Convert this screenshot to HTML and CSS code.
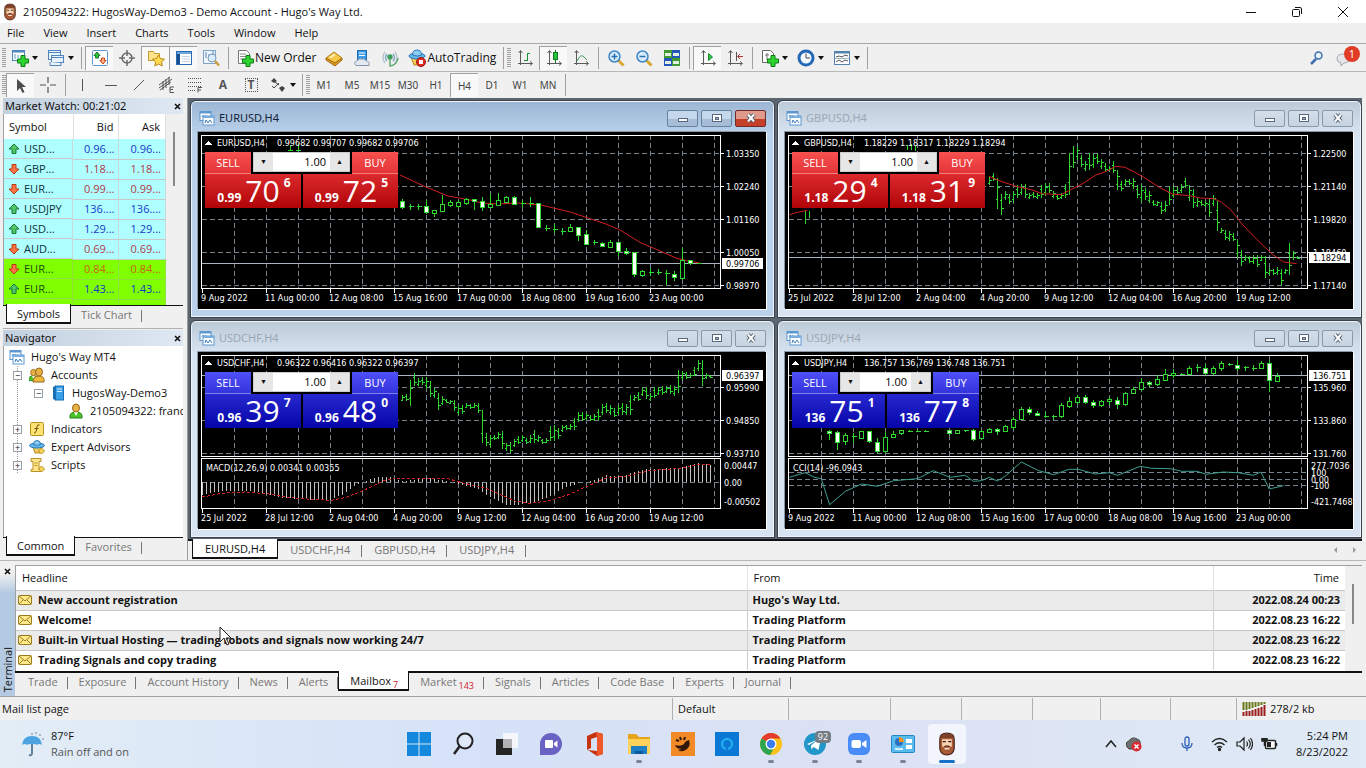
FILE: index.html
```html
<!DOCTYPE html>
<html lang="en">
<head>
    <meta charset="UTF-8">
    <meta name="viewport" content="width=device-width, initial-scale=1.0">
    <title>2105094322: HugosWay-Demo3 - Demo Account - Hugo's Way Ltd.</title>
    <link rel="stylesheet" href="styles.css">
</head>
<body>
    <!-- shared icons -->
    <svg class="sprite" aria-hidden="true">
        <symbol id="i-face" viewBox="0 0 16 20">
            <path d="M2 6Q2 1 8 1T14 6V14Q13 19 8 19T2 14Z" fill="#a85a34" stroke="#4a261a"/>
            <path d="M4 6h8v6q-4 2-8 0Z" fill="#f8d3b4"/>
            <path d="M3 3q5-3 10 0v2H3Z" fill="#7d4029"/>
            <path d="M4.500 8h2.500M9 8h2.500" stroke="#2b1a14"/>
            <path d="M5 12q3-2 6 0l-1 1H6Z" fill="#7a3c22"/>
            <path d="M6 14h4" stroke="#f6e4d4" stroke-width="1.2"/>
        </symbol>
        <symbol id="i-chartwin" viewBox="0 0 16 16">
            <rect x="1" y="1.500" width="11" height="9" fill="#fff" stroke="#5d97d0"/>
            <path d="M1 2.500h11" stroke="#5d97d0" stroke-width="2"/>
            <path d="M3 7l1-2 2 2 1-2" stroke="#5d97d0" fill="none"/>
            <rect x="4" y="6" width="11" height="9" fill="#fff" stroke="#5d97d0"/>
            <path d="M4 7h11" stroke="#79aee0" stroke-width="2"/>
            <path d="M6 13l1-3 2 3 2-3 2 3" stroke="#3f7fc0" fill="none"/>
        </symbol>
        <symbol id="i-plus" viewBox="0 0 12 12">
            <path d="M4 .5h4V4h3.500v4H8v3.500H4V8H.5V4H4Z" fill="#2fd52f" stroke="#0c7c14"/>
        </symbol>
        <symbol id="i-up" viewBox="0 0 12 12">
            <path d="M6 1l5 5H8v4.500H4V6H1Z" fill="#4fc36a" stroke="#157a35"/>
        </symbol>
        <symbol id="i-down" viewBox="0 0 12 12">
            <path d="M6 11l5-5H8V1.500H4V6H1Z" fill="#ff7442" stroke="#b83a14"/>
        </symbol>
        <symbol id="i-mail" viewBox="0 0 14 10">
            <rect x=".5" y=".5" width="13" height="9" rx="1" fill="#ffe98a" stroke="#9c7c22"/>
            <path d="M1 1l6 5 6-5M1 9l4-4M13 9L9 5" fill="none" stroke="#9c7c22"/>
        </symbol>
        <symbol id="i-person" viewBox="0 0 16 16">
            <path d="M2 15q-1-6 6-6t6 6Z" fill="#4cc22a" stroke="#21801a"/>
            <path d="M6 9l2 4 2-4Z" fill="#fff"/>
            <ellipse cx="8" cy="5" rx="3.500" ry="4" fill="#e6b045" stroke="#99661a"/>
        </symbol>
        <symbol id="i-axes" viewBox="0 0 18 18">
            <path d="M4.500 2v14M2 14.500h14M2.500 4l2-2.500 2 2.500M14 12.500l2.500 2-2.500 2" fill="none" stroke="#5b5b5b"/>
        </symbol>
        <symbol id="i-min" viewBox="0 0 14 10">
            <rect x="2.500" y="5.500" width="9" height="3" fill="#fff" stroke="#59687c"/>
        </symbol>
        <symbol id="i-max" viewBox="0 0 14 10">
            <rect x="2.500" y="1.500" width="9" height="7" fill="#fff" stroke="#59687c"/>
            <rect x="5.500" y="4.500" width="3" height="2" fill="#9db0c4" stroke="#59687c"/>
        </symbol>
        <symbol id="i-close" viewBox="0 0 14 10">
            <path d="M4 1.500l6 7M10 1.500l-6 7" stroke="#4d5a6b" stroke-width="4"/>
            <path d="M4 1.500l6 7M10 1.500l-6 7" stroke="#fff" stroke-width="2"/>
        </symbol>
    </svg>

    <header class="title-bar">
        <svg class="app-icon"><use href="#i-face"/></svg>
        <h1>2105094322: HugosWay-Demo3 - Demo Account - Hugo's Way Ltd.</h1>
        <div class="caption-buttons">
            <button type="button" aria-label="Minimize"><svg width="12" height="12"><path d="M1 6.500h10" stroke="#111"/></svg></button>
            <button type="button" aria-label="Restore"><svg width="12" height="12" fill="none" stroke="#111"><rect x="1.500" y="3.500" width="7" height="7" rx="1"/><path d="M4 1.500h5q1.500 0 1.500 1.500v5"/></svg></button>
            <button type="button" aria-label="Close"><svg width="12" height="12"><path d="M1 1l10 10M11 1L1 11" stroke="#111"/></svg></button>
        </div>
    </header>

    <nav class="menu-bar">
        <button type="button">File</button>
        <button type="button">View</button>
        <button type="button">Insert</button>
        <button type="button">Charts</button>
        <button type="button">Tools</button>
        <button type="button">Window</button>
        <button type="button">Help</button>
    </nav>

    <div class="toolbar">
        <span class="grip"></span>
        <button type="button" class="tb drop" aria-label="New chart">
            <svg width="18" height="18"><rect x="1.500" y="1.500" width="12" height="10" fill="#fff" stroke="#4e86bd"/><path d="M1 2.500h13" stroke="#4e86bd" stroke-width="2"/><path d="M4 5v5M7 6v3" stroke="#5d97d0"/><use href="#i-plus" x="6" y="6" width="12" height="12"/></svg>
        </button>
        <button type="button" class="tb drop" aria-label="Profiles">
            <svg width="18" height="18" fill="#eaf3fc" stroke="#4e86bd"><rect x="1.500" y="1.500" width="12" height="9"/><rect x="4.500" y="6.500" width="12" height="7"/><path d="M1.500 3.500h12M3 13v3.500h11V14M4.500 8.500h12" /></svg>
        </button>
        <span class="sep"></span>
        <button type="button" class="tb pressed" aria-label="Market Watch">
            <svg width="18" height="18"><rect x="1.500" y="1.500" width="15" height="15" rx="1" fill="#fff" stroke="#5d97d0"/><path d="M6 3l3 3.500H7.500V9h-3V6.500H3Z" fill="#2fbf3f" stroke="#147a26"/><path d="M12 15l3-3.500h-1.500V9h-3v2.500H9Z" fill="#ffb08a" stroke="#cf4313"/></svg>
        </button>
        <button type="button" class="tb" aria-label="Data Window">
            <svg width="18" height="18" fill="none" stroke="#6b6b6b" stroke-width="1.500"><circle cx="9" cy="9" r="5"/><path d="M9 1v6M9 11v6M1 9h6M11 9h6"/></svg>
        </button>
        <button type="button" class="tb pressed" aria-label="Navigator">
            <svg width="18" height="18"><path d="M1.500 2.500h5l1 2h5v7h-11Z" fill="#ffe48a" stroke="#c39a2a"/><path d="M11.500 6l2 3.600 4 .6-3 2.800.8 4-3.800-2-3.700 2 .7-4-3-2.800 4-.6Z" fill="#ffd94e" stroke="#b8871a"/></svg>
        </button>
        <button type="button" class="tb pressed" aria-label="Terminal">
            <svg width="18" height="18"><rect x="1.500" y="2.500" width="15" height="13" fill="#fff" stroke="#2a6ab0"/><path d="M2 4h14" stroke="#6ca6dd" stroke-width="2"/><path d="M3.500 5v10" stroke="#174f91" stroke-width="3"/><path d="M7 7.500h8M7 10h8M7 12.500h8" stroke="#c3d4e6"/></svg>
        </button>
        <button type="button" class="tb" aria-label="Strategy Tester">
            <svg width="18" height="18"><rect x="1.500" y="1.500" width="12" height="13" fill="#eef5fc" stroke="#7fa3c7"/><path d="M4 3v6M7 5v6M11 2v4" stroke="#5b87b5"/><circle cx="10" cy="9" r="4" fill="#d9ecfb" stroke="#7a98b8"/><path d="M13 12l4 4.500" stroke="#d0a040" stroke-width="2.500"/></svg>
        </button>
        <span class="sep"></span>
        <button type="button" class="tb text">
            <svg width="18" height="18"><path d="M2.500 1.500h8l3 3v10h-11Z" fill="#fff" stroke="#777"/><path d="M4 5h6M4 7.500h6M4 10h4" stroke="#888"/><use href="#i-plus" x="6" y="6" width="12" height="12"/></svg>
            New Order
        </button>
        <button type="button" class="tb" aria-label="MetaEditor">
            <svg width="18" height="18"><path d="M1 9l8-6 8 6-7 6.500Z" fill="#f7c649" stroke="#b37d12"/><path d="M1 9l9 5 7-5v2l-7 6-9-6Z" fill="#d99b20" stroke="#a06c10"/><path d="M5 8.500l5-3" stroke="#fff3c0" stroke-width="2"/></svg>
        </button>
        <button type="button" class="tb" aria-label="Market">
            <svg width="18" height="18"><rect x="4.500" y="1.500" width="9" height="9" fill="#3d9be6" stroke="#1d6db4"/><path d="M6 4h6M6 6.500h6" stroke="#fff"/><path d="M3 16.500Q0 13 4 12q1-3 5-2 3-1 4 2 4 0 3 4.500Z" fill="#e3e9f1" stroke="#8495aa"/></svg>
        </button>
        <button type="button" class="tb" aria-label="Signals">
            <svg width="18" height="18" fill="none" stroke-width="1.400"><path d="M4 3Q0 8.500 4 14M14 3q4 5.500 0 11" stroke="#b4c2ce"/><path d="M6 5Q3 8.500 6 12M12 5q3 3.500 0 7" stroke="#7fa6c0"/><circle cx="9" cy="8" r="2" fill="#3e9b5e" stroke="#3e9b5e"/><path d="M9 9v8q7-1 8-8" stroke="#58a86e"/></svg>
        </button>
        <button type="button" class="tb text">
            <svg width="18" height="18"><path d="M3 8h12l-3 8H6Z" fill="#f5cf55" stroke="#b78a20"/><ellipse cx="9" cy="7" rx="8" ry="3" fill="#63b5ea" stroke="#2878b6"/><path d="M4.500 6q0-5 4.500-5t4.500 5q-4 2-9 0" fill="#8fcdf4" stroke="#2878b6"/><circle cx="13" cy="13" r="4.500" fill="#e22b1e" stroke="#9e160e"/><rect x="11" y="11" width="4" height="4" fill="#fff"/></svg>
            AutoTrading
        </button>
        <span class="sep"></span>
        <span class="grip"></span>
        <button type="button" class="tb" aria-label="Bar chart">
            <svg width="18" height="18"><use href="#i-axes"/><path d="M8 11.500h3.500V4.500H14M11.500 4v8" fill="none" stroke="#189038"/></svg>
        </button>
        <button type="button" class="tb pressed" aria-label="Candlesticks">
            <svg width="18" height="18"><use href="#i-axes"/><path d="M10.500 1v13" stroke="#0f7a22"/><rect x="8.500" y="3.500" width="4" height="7" fill="#24c43c" stroke="#0f7a22"/></svg>
        </button>
        <button type="button" class="tb" aria-label="Line chart">
            <svg width="18" height="18"><use href="#i-axes"/><path d="M5 12q4-8 7-4l3 3" fill="none" stroke="#3c9b55"/></svg>
        </button>
        <span class="sep"></span>
        <button type="button" class="tb" aria-label="Zoom in">
            <svg width="18" height="18"><path d="M11 11l5.500 5.500" stroke="#d9a72d" stroke-width="3"/><circle cx="7.500" cy="7.500" r="5.500" fill="#d7ecfc" stroke="#3d86c6" stroke-width="1.500"/><path d="M4.500 7.500h6M7.500 4.500v6" stroke="#2a72b5" stroke-width="1.500"/></svg>
        </button>
        <button type="button" class="tb" aria-label="Zoom out">
            <svg width="18" height="18"><path d="M11 11l5.500 5.500" stroke="#d9a72d" stroke-width="3"/><circle cx="7.500" cy="7.500" r="5.500" fill="#d7ecfc" stroke="#3d86c6" stroke-width="1.500"/><path d="M4.500 7.500h6" stroke="#2a72b5" stroke-width="1.500"/></svg>
        </button>
        <button type="button" class="tb" aria-label="Tile windows">
            <svg width="18" height="18"><path d="M1 1h8v8H1ZM9 9h8v8H9Z" fill="#3f9b2f"/><path d="M9 1h8v8H9ZM1 9h8v8H1Z" fill="#2457b8"/><path d="M2 4h6v3H2ZM10 4h6v3h-6ZM2 12h6v3H2ZM10 12h6v3h-6Z" fill="#e4efe4"/></svg>
        </button>
        <span class="sep"></span>
        <button type="button" class="tb pressed" aria-label="Auto scroll">
            <svg width="18" height="18"><use href="#i-axes"/><path d="M9.500 4.500l4 3.500-4 3.500Z" fill="#35c24a" stroke="#178a2c"/></svg>
        </button>
        <button type="button" class="tb" aria-label="Chart shift">
            <svg width="18" height="18"><use href="#i-axes"/><path d="M10.500 3v9" stroke="#555"/><path d="M17 7.500h-5M14 5l-2.500 2.500L14 10" fill="none" stroke="#a33"/></svg>
        </button>
        <span class="sep"></span>
        <button type="button" class="tb drop" aria-label="Indicators">
            <svg width="18" height="18"><path d="M1.500 1.500h8l3 3v9h-11Z" fill="#fff" stroke="#666"/><path d="M6 4v7M4 6h4" stroke="#777"/><use href="#i-plus" x="6" y="6" width="12" height="12"/></svg>
        </button>
        <button type="button" class="tb drop" aria-label="Periodicity">
            <svg width="18" height="18"><circle cx="9" cy="9" r="7" fill="#f4faff" stroke="#2467b4" stroke-width="3"/><path d="M9 4.500V9h4" fill="none" stroke="#444"/></svg>
        </button>
        <button type="button" class="tb drop" aria-label="Templates">
            <svg width="18" height="18"><rect x="1.500" y="2.500" width="15" height="13" fill="#fff" stroke="#5583ad"/><path d="M1 3.500h16" stroke="#5583ad" stroke-width="2"/><path d="M3 8l3-1 3 1 3-2 3 1M3 13l3-2 3 2 3-2 3 1" fill="none" stroke="#555"/><path d="M2 9.500h14" stroke="#9bb"/></svg>
        </button>
        <span class="sep"></span>
        <div class="toolbar-right">
            <button type="button" class="tb" aria-label="Search">
                <svg width="18" height="18"><path d="M8 10l-5 5" stroke="#3d6fae" stroke-width="2.500"/><circle cx="10.500" cy="6.500" r="3.500" fill="#e7f0fb" stroke="#3d6fae" stroke-width="1.500"/></svg>
            </button>
            <button type="button" class="tb chat" aria-label="Messages">
                <svg width="18" height="18"><path d="M1 10q0-5 6-5t6 5q0 4-5 4l-3 3v-3q-4-1-4-4" fill="#e4e6ea" stroke="#a3a8b0"/></svg>
                <span class="badge">1</span>
            </button>
        </div>
    </div>

    <div class="toolbar second">
        <span class="grip"></span>
        <button type="button" class="tb pressed" aria-label="Cursor"><svg width="18" height="18"><path d="M5 2v12l3-3 2.500 5 2-1L10 10h4Z" fill="#4c4c4c"/></svg></button>
        <button type="button" class="tb" aria-label="Crosshair"><svg width="18" height="18" stroke="#555" stroke-width="1.200"><path d="M9 1v6M9 11v6M1 9h6M11 9h6"/></svg></button>
        <span class="sep"></span>
        <button type="button" class="tb" aria-label="Vertical line"><svg width="18" height="18" stroke="#555"><path d="M8.500 3v12"/></svg></button>
        <button type="button" class="tb" aria-label="Horizontal line"><svg width="18" height="18" stroke="#555"><path d="M3 9.500h12"/></svg></button>
        <button type="button" class="tb" aria-label="Trendline"><svg width="18" height="18" stroke="#555"><path d="M4 14L14 4"/></svg></button>
        <button type="button" class="tb" aria-label="Channel"><svg width="18" height="18" stroke="#555" fill="none"><path d="M1 9l11-8M1 12l13-9M2 14l11-8M5 5v9M8 3v9M11 1v8"/><path d="M16 11h-4v5.500h4M12 13.500h3"/></svg></button>
        <button type="button" class="tb" aria-label="Fibonacci"><svg width="18" height="18" stroke="#555" fill="none"><path d="M2 2.500h14M2 6.500h14M2 10.500h14M2 14.500h8" stroke-dasharray="1 1"/><path d="M16 11.500h-4v5M12 14h3"/></svg></button>
        <button type="button" class="tb glyph" aria-label="Text">A</button>
        <button type="button" class="tb glyph" aria-label="Text label"><span class="boxed">T</span></button>
        <button type="button" class="tb drop" aria-label="Arrows"><svg width="18" height="18" fill="#444"><path d="M2 5l3-3 3 3-3 2ZM10 12l3-2 3 2-3 4Z"/><path d="M3 10l2 2 5-5M6 6l4 3" fill="none" stroke="#444"/></svg></button>
        <span class="sep"></span>
        <span class="grip"></span>
        <button type="button" class="tb period">M1</button>
        <button type="button" class="tb period">M5</button>
        <button type="button" class="tb period">M15</button>
        <button type="button" class="tb period">M30</button>
        <button type="button" class="tb period">H1</button>
        <button type="button" class="tb period pressed">H4</button>
        <button type="button" class="tb period">D1</button>
        <button type="button" class="tb period">W1</button>
        <button type="button" class="tb period">MN</button>
        <span class="sep"></span>
    </div>

    <main class="workspace">
        <aside class="dock">
            <section class="panel market">
                <header class="panel-title"><h2>Market Watch: 00:21:02</h2><button type="button" aria-label="Close Market Watch"><svg width="7" height="7"><path d="M1 1l5 5M6 1L1 6" stroke="#111" stroke-width="1.600"/></svg></button></header>
                <div class="market-body">
                    <table class="quotes">
                        <thead><tr><th>Symbol</th><th>Bid</th><th>Ask</th></tr></thead>
                        <tbody>
                            <tr class="up"><td><svg><use href="#i-up"/></svg>USD...</td><td>0.96...</td><td>0.96...</td></tr>
                            <tr class="down"><td><svg><use href="#i-down"/></svg>GBP...</td><td>1.18...</td><td>1.18...</td></tr>
                            <tr class="down"><td><svg><use href="#i-down"/></svg>EUR...</td><td>0.99...</td><td>0.99...</td></tr>
                            <tr class="up"><td><svg><use href="#i-up"/></svg>USDJPY</td><td>136....</td><td>136....</td></tr>
                            <tr class="up"><td><svg><use href="#i-up"/></svg>USD...</td><td>1.29...</td><td>1.29...</td></tr>
                            <tr class="down"><td><svg><use href="#i-down"/></svg>AUD...</td><td>0.69...</td><td>0.69...</td></tr>
                            <tr class="down green"><td><svg><use href="#i-down"/></svg>EUR...</td><td>0.84...</td><td>0.84...</td></tr>
                            <tr class="up green"><td><svg><use href="#i-up"/></svg>EUR...</td><td>1.43...</td><td>1.43...</td></tr>
                            <tr class="green"><td></td><td></td><td></td></tr>
                        </tbody>
                    </table>
                    <div class="scroll"><span class="thumb market-thumb"></span></div>
                </div>
                <div class="tabs dock-tabs">
                    <button type="button" class="active">Symbols</button><button type="button">Tick Chart</button>
                </div>
            </section>

            <section class="panel navigator">
                <header class="panel-title"><h2>Navigator</h2><button type="button" aria-label="Close Navigator"><svg width="7" height="7"><path d="M1 1l5 5M6 1L1 6" stroke="#111" stroke-width="1.600"/></svg></button></header>
                <ul class="tree">
                    <li class="root"><svg><use href="#i-chartwin"/></svg>Hugo's Way MT4</li>
                    <li class="node"><span class="box">−</span><svg viewBox="0 0 16 16"><use href="#i-person" x="-2" y="1" width="13" height="14"/><path d="M4 15q0-6 6-6t5 6Z" fill="#f0b93c" stroke="#99661a"/><ellipse cx="10" cy="5" rx="3.500" ry="4" fill="#e6b045" stroke="#99661a"/></svg>Accounts</li>
                    <li class="node level2"><span class="box">−</span><svg viewBox="0 0 16 16"><path d="M3 2l3-1.500v15L3 14Z" fill="#1b6fb5"/><rect x="5.500" y="1" width="8" height="14" fill="#39a0e8" stroke="#1b6fb5"/><path d="M7 4h5M7 6.500h5" stroke="#d9efff"/></svg>HugosWay-Demo3</li>
                    <li class="node level3"><svg><use href="#i-person"/></svg>2105094322: franc</li>
                    <li class="node"><span class="box">+</span><svg viewBox="0 0 16 16"><rect x="1.500" y="1.500" width="13" height="13" rx="1" fill="#ffe272" stroke="#b99327"/><path d="M10.500 4q-2-1-2.500 1.500l-1 5Q6.500 12 5 12M5.500 7.500h4" fill="none" stroke="#6b5210"/></svg>Indicators</li>
                    <li class="node"><span class="box">+</span><svg viewBox="0 0 16 16"><path d="M4 8h9l-2 6H6Z" fill="#f0c860" stroke="#b78a20"/><ellipse cx="8" cy="6.500" rx="7.500" ry="2.500" fill="#63b5ea" stroke="#2878b6"/><path d="M4.500 5.500q0-4 3.500-4t3.500 4q-3 1.500-7 0" fill="#8fcdf4" stroke="#2878b6"/><path d="M12.500 9l3 3-3 3-3-3Z" fill="#ffd85a" stroke="#b08a20"/></svg>Expert Advisors</li>
                    <li class="node"><span class="box">+</span><svg viewBox="0 0 16 16"><path d="M2 1.500h10v3h-2v8H12v2H2v-2h2v-8H2Z" fill="#ffe58c" stroke="#b99327"/><path d="M5.500 6h3M5.500 8.500h3" stroke="#b99327"/><path d="M12.500 9l3 3-3 3-3-3Z" fill="#ffd85a" stroke="#b08a20"/></svg>Scripts</li>
                </ul>
                <div class="tabs dock-tabs">
                    <button type="button" class="active">Common</button><button type="button">Favorites</button>
                </div>
            </section>
        </aside>

        <section class="mdi">
            <div class="windows">
                <article class="window active">
                    <header><svg class="win-icon"><use href="#i-chartwin"/></svg><h3>EURUSD,H4</h3>
                        <button type="button" aria-label="Minimize"><svg><use href="#i-min"/></svg></button>
                        <button type="button" aria-label="Maximize"><svg><use href="#i-max"/></svg></button>
                        <button type="button" class="close" aria-label="Close"><svg><use href="#i-close"/></svg></button>
                    </header>
                    <div class="chart">
                        <svg id="eurusd" viewBox="0 0 568 177" preserveAspectRatio="xMinYMin meet"></svg>
                        <div class="one-click red">
                            <button type="button" class="side">SELL</button>
                            <div class="volume"><button type="button" aria-label="Less">▼</button><input type="text" value="1.00" aria-label="Volume"><button type="button" aria-label="More">▲</button></div>
                            <button type="button" class="side">BUY</button>
                            <button type="button" class="price"><b>0.99</b><span>70</span><sup>6</sup></button>
                            <button type="button" class="price"><b>0.99</b><span>72</span><sup>5</sup></button>
                        </div>
                    </div>
                </article>

                <article class="window">
                    <header><svg class="win-icon"><use href="#i-chartwin"/></svg><h3>GBPUSD,H4</h3>
                        <button type="button" aria-label="Minimize"><svg><use href="#i-min"/></svg></button>
                        <button type="button" aria-label="Maximize"><svg><use href="#i-max"/></svg></button>
                        <button type="button" class="close" aria-label="Close"><svg><use href="#i-close"/></svg></button>
                    </header>
                    <div class="chart">
                        <svg id="gbpusd" viewBox="0 0 568 177" preserveAspectRatio="xMinYMin meet"></svg>
                        <div class="one-click red">
                            <button type="button" class="side">SELL</button>
                            <div class="volume"><button type="button" aria-label="Less">▼</button><input type="text" value="1.00" aria-label="Volume"><button type="button" aria-label="More">▲</button></div>
                            <button type="button" class="side">BUY</button>
                            <button type="button" class="price"><b>1.18</b><span>29</span><sup>4</sup></button>
                            <button type="button" class="price"><b>1.18</b><span>31</span><sup>9</sup></button>
                        </div>
                    </div>
                </article>

                <article class="window">
                    <header><svg class="win-icon"><use href="#i-chartwin"/></svg><h3>USDCHF,H4</h3>
                        <button type="button" aria-label="Minimize"><svg><use href="#i-min"/></svg></button>
                        <button type="button" aria-label="Maximize"><svg><use href="#i-max"/></svg></button>
                        <button type="button" class="close" aria-label="Close"><svg><use href="#i-close"/></svg></button>
                    </header>
                    <div class="chart">
                        <svg id="usdchf" viewBox="0 0 568 177" preserveAspectRatio="xMinYMin meet"></svg>
                        <div class="one-click blue">
                            <button type="button" class="side">SELL</button>
                            <div class="volume"><button type="button" aria-label="Less">▼</button><input type="text" value="1.00" aria-label="Volume"><button type="button" aria-label="More">▲</button></div>
                            <button type="button" class="side">BUY</button>
                            <button type="button" class="price"><b>0.96</b><span>39</span><sup>7</sup></button>
                            <button type="button" class="price"><b>0.96</b><span>48</span><sup>0</sup></button>
                        </div>
                    </div>
                </article>

                <article class="window">
                    <header><svg class="win-icon"><use href="#i-chartwin"/></svg><h3>USDJPY,H4</h3>
                        <button type="button" aria-label="Minimize"><svg><use href="#i-min"/></svg></button>
                        <button type="button" aria-label="Maximize"><svg><use href="#i-max"/></svg></button>
                        <button type="button" class="close" aria-label="Close"><svg><use href="#i-close"/></svg></button>
                    </header>
                    <div class="chart">
                        <svg id="usdjpy" viewBox="0 0 568 177" preserveAspectRatio="xMinYMin meet"></svg>
                        <div class="one-click blue narrow">
                            <button type="button" class="side">SELL</button>
                            <div class="volume"><button type="button" aria-label="Less">▼</button><input type="text" value="1.00" aria-label="Volume"><button type="button" aria-label="More">▲</button></div>
                            <button type="button" class="side">BUY</button>
                            <button type="button" class="price"><b>136</b><span>75</span><sup>1</sup></button>
                            <button type="button" class="price"><b>136</b><span>77</span><sup>8</sup></button>
                        </div>
                    </div>
                </article>
            </div>
            <div class="tabs chart-tabs">
                <button type="button" class="active">EURUSD,H4</button><button type="button">USDCHF,H4</button><button type="button">GBPUSD,H4</button><button type="button">USDJPY,H4</button>
                <span class="tab-arrows"><svg width="26" height="8" fill="#999"><path d="M5 1v6L2 4ZM21 1v6l3-3Z"/></svg></span>
            </div>
        </section>
    </main>

    <section class="terminal">
        <div class="terminal-side">
            <button type="button" aria-label="Close Terminal"><svg width="7" height="7"><path d="M1 1l5 5M6 1L1 6" stroke="#111" stroke-width="1.600"/></svg></button>
            <span>Terminal</span>
        </div>
        <div class="terminal-main">
            <div class="mail-wrap">
                <table class="mail">
                    <colgroup><col><col class="col-from"><col class="col-time"></colgroup>
                    <thead><tr><th>Headline</th><th>From</th><th>Time</th></tr></thead>
                    <tbody>
                        <tr><td><svg><use href="#i-mail"/></svg>New account registration</td><td>Hugo's Way Ltd.</td><td>2022.08.24 00:23</td></tr>
                        <tr><td><svg><use href="#i-mail"/></svg>Welcome!</td><td>Trading Platform</td><td>2022.08.23 16:22</td></tr>
                        <tr><td><svg><use href="#i-mail"/></svg>Built-in Virtual Hosting — trading robots and signals now working 24/7</td><td>Trading Platform</td><td>2022.08.23 16:22</td></tr>
                        <tr><td><svg><use href="#i-mail"/></svg>Trading Signals and copy trading</td><td>Trading Platform</td><td>2022.08.23 16:22</td></tr>
                    </tbody>
                </table>
                <div class="scroll"><span class="thumb mail-thumb"></span></div>
            </div>
            <div class="tabs terminal-tabs">
                <button type="button">Trade</button><button type="button">Exposure</button><button type="button">Account History</button><button type="button">News</button><button type="button">Alerts</button><button type="button" class="active">Mailbox<sub>7</sub></button><button type="button">Market<sub>143</sub></button><button type="button">Signals</button><button type="button">Articles</button><button type="button">Code Base</button><button type="button">Experts</button><button type="button">Journal</button>
            </div>
        </div>
    </section>

    <footer class="status-bar">
        <span>Mail list page</span><span>Default</span><span></span><span></span><span></span><span></span><span></span><span></span>
        <span><svg width="24" height="14"><path d="M1.500 0v8M4.500 0v8M7.500 0v7M10.500 0v6M13.500 0v5M16.500 0v4M19.500 0v3M22.500 0v2" stroke="#6b7a1e" stroke-width="2"/><path d="M1.500 10v4M4.500 9v5M7.500 9v5M10.500 8v6M13.500 7v7M16.500 6v8M19.500 5v9M22.500 3v11" stroke="#9b1c1c" stroke-width="2"/></svg>278/2 kb</span>
    </footer>

    <div class="taskbar">
        <button type="button" class="weather">
            <svg width="26" height="26"><path d="M3 14Q4 5 13 5t10 9q-3-2-5 0-2-2-5 0-2-2-5 0-2-2-5 0" fill="#4ba3e0"/><path d="M13 13v9q0 3-3 2" fill="none" stroke="#5f7f9a" stroke-width="2"/><path d="M13 2v2M17 1v2M21 3v2M24 7v2" stroke="#8fa6bd" stroke-width="1.500"/></svg>
            <span>87°F<small>Rain off and on</small></span>
        </button>
        <div class="apps">
            <button type="button" aria-label="Start"><svg viewBox="0 0 24 24"><path d="M0 0h11.500v11.500H0ZM12.500 0H24v11.500H12.500ZM0 12.500h11.500V24H0ZM12.500 12.500H24V24H12.500Z" fill="#1388dc"/></svg></button>
            <button type="button" aria-label="Search"><svg viewBox="0 0 24 24" fill="none" stroke="#222"><circle cx="14" cy="9" r="7.500" fill="#dfe8f6" stroke-width="2"/><path d="M8.500 14.500L3 22" stroke-width="2.500"/></svg></button>
            <button type="button" aria-label="Task view"><svg viewBox="0 0 24 24"><rect x="8" y="1" width="15" height="15" fill="#f6f7fa"/><rect x="1" y="7" width="16" height="16" fill="#252525"/><rect x="8" y="7" width="9" height="9" fill="#b3b3b5"/></svg></button>
            <button type="button" aria-label="Chat"><svg viewBox="0 0 24 24"><path d="M1 23V12A11 11 0 1 1 12 23Z" fill="#6a63c4"/><rect x="6" y="8" width="8" height="8" rx="1" fill="#fff"/><path d="M15 11l3.500-2.500v7L15 13Z" fill="#fff"/></svg></button>
            <button type="button" aria-label="Office"><svg viewBox="0 0 24 24"><path d="M13 0L4 4v14l4-2V7l6-2v14l-9-1 9 6 6-2V2Z" fill="#c8330f"/><path d="M13 0l7 2v20l-6 2V5Z" fill="#f0582b"/></svg></button>
            <button type="button" class="open" aria-label="File Explorer"><svg viewBox="0 0 24 24"><path d="M1 2h8l3 3h11v16H1Z" fill="#e6a51c"/><path d="M1 7h22v15H1Z" fill="#ffd35a"/><path d="M4 14h16v8H4Z" fill="#1f7fc5"/><path d="M8 19h8v3H8Z" fill="#0e5a9c"/></svg></button>
            <button type="button" aria-label="Games"><svg viewBox="0 0 24 24"><rect width="24" height="24" fill="#f28a28"/><path d="M4 13q6 2 9-1 1-3 5-4 2 6-2 9-5 4-9 1l4-1q-6 0-7-4" fill="#30180a"/><path d="M5 8l3 1M9 5l1 3M14 5l-1 3" stroke="#30180a" stroke-width="2"/></svg></button>
            <button type="button" aria-label="Alexa"><svg viewBox="0 0 24 24"><rect width="24" height="24" fill="#0a78d4"/><circle cx="12" cy="12" r="5" fill="none" stroke="#24b6f4" stroke-width="2"/><path d="M11 16h2v3h-2Z" fill="#0a78d4"/></svg></button>
            <button type="button" class="open" aria-label="Chrome"><svg viewBox="0 0 24 24"><circle cx="12" cy="12" r="11" fill="#fbc116"/><path d="M12 12L2.500 6.500A11 11 0 0 1 21.500 6.500H12Z" fill="#e33b2e"/><path d="M12 12L2.500 6.500A11 11 0 0 0 11 23l5-8.500Z" fill="#2da44e"/><circle cx="12" cy="12" r="5.500" fill="#fff"/><circle cx="12" cy="12" r="4.200" fill="#3b7ded"/></svg></button>
            <button type="button" class="open telegram" aria-label="Telegram"><svg viewBox="0 0 24 24"><circle cx="12" cy="12" r="11" fill="#2196c9"/><path d="M4 12l14-6-2.500 12-5-3-2 2.500-.5-4 7-6-9 5.500Z" fill="#fff"/></svg><span class="count">92</span></button>
            <button type="button" class="open" aria-label="Zoom"><svg viewBox="0 0 24 24"><rect x="1" y="1" width="22" height="22" rx="6" fill="#4a8cf7"/><rect x="4.500" y="8" width="9.500" height="8" rx="2" fill="#fff"/><path d="M15 11l4.500-3v8L15 13Z" fill="#fff"/></svg></button>
            <button type="button" class="open" aria-label="Control Panel"><svg viewBox="0 0 24 24"><rect x=".5" y="3.500" width="23" height="17" rx="1" fill="#5bbcf0" stroke="#2786c4"/><circle cx="8" cy="10" r="4" fill="#2f6fc0"/><path d="M8 10V5a5 5 0 0 1 5 5Z" fill="#f0941e"/><path d="M15 7h6v4h-6ZM15 13h6v4h-6Z" fill="#fff"/><path d="M4 17h8" stroke="#fff" stroke-width="1.500"/></svg></button>
            <button type="button" class="current" aria-label="Hugo's Way"><svg viewBox="0 0 24 24"><use href="#i-face" x="2" y="0" width="20" height="24"/></svg></button>
        </div>
        <div class="tray">
            <button type="button" aria-label="Hidden icons"><svg width="12" height="16" fill="none" stroke="#222" stroke-width="1.500"><path d="M1 11l5-6 5 6"/></svg></button>
            <button type="button" aria-label="OneDrive"><svg width="18" height="16"><path d="M2 11Q0 6 4 5q3-5 8-2 4 1 3 6v4H4Z" fill="#6f6f6f" stroke="#444"/><circle cx="11.500" cy="10.500" r="5" fill="#d92b35"/><path d="M9.500 8.500l4 4M13.500 8.500l-4 4" stroke="#fff" stroke-width="1.500"/></svg></button>
            <button type="button" class="mic" aria-label="Microphone"><svg width="12" height="16" fill="none" stroke="#2a5fb4" stroke-width="1.300"><rect x="4" y="1" width="4" height="9" rx="2"/><path d="M1 7q0 5 5 5t5-5M6 12v3"/></svg></button>
            <button type="button" aria-label="Network"><svg width="17" height="16" fill="none" stroke="#222" stroke-width="1.400"><path d="M1 6q7.500-7 15 0M3.500 9q5-4.500 10 0M6 11.500q2.500-2 5 0"/><circle cx="8.500" cy="13.500" r="1" fill="#222"/></svg></button>
            <button type="button" aria-label="Volume"><svg width="17" height="16" fill="none" stroke="#222" stroke-width="1.200"><path d="M1 6h3l4-4v12l-4-4H1ZM10.500 5.500q2 2.500 0 5M12.500 3.500q3.500 4.500 0 9M14.500 2q4 6 0 12"/></svg></button>
            <button type="button" aria-label="Battery"><svg width="17" height="16"><rect x="4.500" y="4.500" width="10" height="8" rx="1" fill="#fff" stroke="#222" stroke-width="1.500"/><rect x="6" y="6" width="4" height="5" fill="#222"/><path d="M15.500 7v3" stroke="#222" stroke-width="1.500"/><path d="M1 2v3h5V2M3.500 5v5" stroke="#222" stroke-width="1.500" fill="#222"/></svg></button>
            <button type="button" class="clock">5:24 PM<br>8/23/2022</button>
        </div>
    </div>

    <svg class="pointer" width="14" height="20" aria-hidden="true"><path d="M1 1v15l4-4 3 7 2-1-3-6h5Z" fill="#fff" stroke="#222"/></svg>

    <script src="charts.js"></script>
</body>
</html>
```
FILE: styles.css
```css
* {
    box-sizing: border-box;
}

body {
    margin: 0;
    height: 100vh;
    display: flex;
    flex-direction: column;
    overflow: hidden;
    background-color: #f0f0f0;
    font-family: "Open Sans", "Noto Sans", sans-serif;
    font-size: 11px;
    line-height: 16px;
    color: #111;
}

h1, h2, h3, ul {
    margin: 0;
    padding: 0;
    font-size: 11px;
    font-weight: normal;
}

button {
    margin: 0;
    padding: 0;
    border: none;
    background: none;
    font: inherit;
    color: inherit;
}

svg {
    display: block;
    flex: none;
}

.sprite {
    display: none;
}

/* title and menu */
.title-bar {
    display: flex;
    align-items: center;
    height: 23px;
    padding-left: 3px;
    background-color: #fff;
}

.app-icon {
    width: 14px;
    height: 18px;
    margin-right: 6px;
}

.caption-buttons {
    display: flex;
    margin-left: auto;
}

.caption-buttons button {
    display: flex;
    align-items: center;
    justify-content: center;
    width: 46px;
    height: 22px;
}

.menu-bar {
    display: flex;
    gap: 19px;
    height: 20px;
    padding: 1px 7px;
}

/* toolbars */
.toolbar {
    display: flex;
    align-items: center;
    height: 28px;
    padding-left: 2px;
    border-top: 1px solid #a8a8a8;
}

.toolbar.second {
    height: 27px;
    border-top-color: #b8b8b8;
}

.grip {
    width: 4px;
    height: 20px;
    background-image: repeating-linear-gradient(#a0a0a0 0 1px, #f0f0f0 1px 2px);
}

.sep {
    width: 1px;
    height: 22px;
    margin: 0 3px;
    background-color: #a0a0a0;
}

.tb {
    display: flex;
    align-items: center;
    justify-content: center;
    width: 28px;
    height: 24px;
}

.tb.drop {
    width: 36px;
    gap: 3px;
}

.second .tb.drop {
    width: 34px;
}

.tb.drop::after {
    content: "";
    border: 3px solid transparent;
    border-top: 4px solid #111;
    border-bottom: none;
}

.tb.text {
    width: auto;
    padding: 0 4px;
    gap: 1px;
    font-size: 12px;
}

.tb.pressed {
    background-color: #f9f9f9;
    border-top: 1px solid #a0a0a0;
    border-left: 1px solid #a0a0a0;
}

.tb.period {
    font-family: "Noto Sans", sans-serif;
    font-size: 10px;
    color: #444;
}

.tb.glyph {
    font-size: 12px;
    font-weight: bold;
    color: #555;
}

.boxed {
    width: 13px;
    height: 14px;
    line-height: 12px;
    border: 1px dotted #555;
}

.toolbar-right {
    display: flex;
    margin-left: auto;
    padding-right: 7px;
}

.chat {
    position: relative;
}

.badge {
    position: absolute;
    top: 0;
    right: -1px;
    width: 16px;
    height: 16px;
    border-radius: 8px;
    background-color: #e03c28;
    color: #fff;
    text-align: center;
}

/* work area */
.workspace {
    display: flex;
    flex: 1;
    min-height: 0;
    padding-right: 4px;
}

.dock {
    display: flex;
    flex-direction: column;
    width: 188px;
    padding: 0 4px 0 3px;
    border-right: 1px solid #9a9a9a;
}

.panel {
    display: flex;
    flex-direction: column;
    min-height: 0;
}

.market {
    height: 231px;
    border-bottom: 1px solid #b0b0b0;
    margin-bottom: 1px;
}

.navigator {
    flex: 1;
}

.panel-title {
    display: flex;
    align-items: center;
    justify-content: space-between;
    height: 16px;
    padding: 0 2px;
    background-image: linear-gradient(90deg, #c3d0df, #dfe8f2);
}

.panel-title h2 {
    font-family: "Noto Sans", sans-serif;
}

.market-body {
    display: flex;
    height: 191px;
    overflow: hidden;
    border-left: 1px solid #a0a0a0;
}

.scroll {
    flex: none;
    width: 17px;
    padding: 18px 7px;
    background-color: #f0f0f0;
}

.thumb {
    display: block;
    width: 2px;
    background-color: #888;
}

.market-thumb {
    height: 54px;
}

.mail-thumb {
    height: 40px;
}

table {
    border-collapse: collapse;
    table-layout: fixed;
}

th {
    font-weight: normal;
}

.quotes {
    flex: 1;
    height: 205px;
}

.quotes th {
    height: 25px;
    padding: 0 5px;
    background-color: #fff;
    border-right: 1px solid #e0e0e0;
    text-align: right;
}

.quotes th:first-child {
    width: 69px;
    text-align: left;
}

.quotes td {
    height: 20px;
    padding: 0 4px;
    border-bottom: 1px solid #c9c9c9;
    border-right: 1px solid #c9dada;
    background-color: #b0ffff;
    text-align: right;
}

.quotes .green td {
    background-color: #80ff00;
    border-right-color: #8fe03c;
    border-bottom-color: #8fe03c;
}

.quotes td:first-child {
    display: flex;
    align-items: center;
    gap: 4px;
}

.quotes td svg {
    width: 12px;
    height: 12px;
}

.up td {
    color: #1438c8;
}

.down td {
    color: #b03a48;
}

.down.green td {
    color: #c86410;
}

.quotes tr td:first-child {
    color: #0c2f38;
}

.quotes .green td:first-child {
    color: #1c4a10;
}

.tree {
    flex: 1;
    overflow: hidden;
    padding-top: 2px;
    border-left: 1px solid #a0a0a0;
    background-color: #fff;
    list-style: none;
}

.tree li {
    display: flex;
    align-items: center;
    gap: 6px;
    height: 18px;
    white-space: nowrap;
}

.tree svg {
    width: 16px;
    height: 16px;
}

.tree .root {
    padding-left: 5px;
}

.tree .node {
    padding-left: 9px;
    background: repeating-linear-gradient(#999 0 1px, #fff 1px 2px) 13px 0 / 1px 18px no-repeat;
}

.tree .level2 {
    padding-left: 30px;
}

.tree .level3 {
    padding-left: 76px;
}

.tree .level3::before {
    content: "";
    width: 12px;
    height: 1px;
    margin-left: -18px;
    border-top: 1px dotted #999;
}

.box {
    width: 9px;
    height: 9px;
    margin-right: 1px;
    border: 1px solid #9aa0a8;
    background-color: #fff;
    font-size: 9px;
    line-height: 7px;
    text-align: center;
}

/* tab strips */
.tabs {
    display: flex;
    flex: none;
    align-items: flex-start;
    border-top: 2px solid #111;
    background-color: #f0f0f0;
    color: #777;
}

.tabs button {
    position: relative;
    height: 18px;
    padding: 0 10px;
}

.tabs button::after {
    content: "";
    position: absolute;
    right: 0;
    top: 4px;
    height: 12px;
    border-right: 1px solid #777;
}

.tabs .active {
    height: 20px;
    margin-top: -2px;
    padding-top: 2px;
    border: 1px solid #111;
    border-top: none;
    border-bottom-width: 2px;
    background-color: #fff;
    color: #111;
}

.tabs .active::after {
    display: none;
}

.dock-tabs {
    height: 23px;
    padding-left: 3px;
    border-top-width: 1px;
}

.chart-tabs {
    height: 21px;
    padding-left: 4px;
}

.chart-tabs button {
    padding: 0 12px;
}

.tab-arrows {
    margin: 5px 4px 0 auto;
}

/* chart windows */
.mdi {
    display: flex;
    flex: 1;
    flex-direction: column;
    min-width: 0;
}

.windows {
    display: grid;
    flex: 1;
    grid-template-columns: 1fr 1fr;
    grid-template-rows: 1fr 1fr;
    gap: 2px;
    min-height: 0;
    padding: 2px 0 1px 2px;
    background-color: #5c6670;
}

.window {
    display: flex;
    flex-direction: column;
    min-height: 0;
    padding: 0 8px 8px 7px;
    border: 1px solid #39424c;
    border-radius: 6px 6px 0 0;
    background-image: linear-gradient(#bccad8, #d7e3f0 32px);
    box-shadow: inset 0 0 0 1px #eef4fa;
}

.window.active {
    background-image: linear-gradient(#9bb5d3, #b9d1ea 32px);
}

.window header {
    display: flex;
    flex: none;
    align-items: center;
    gap: 3px;
    height: 31px;
    padding-top: 3px;
}

.window h3 {
    margin: 0 auto 0 1px;
    font-family: "Noto Sans", sans-serif;
    color: #9ca7b2;
}

.window.active h3 {
    color: #12223a;
}

.win-icon {
    width: 16px;
    height: 16px;
    margin-left: 1px;
}

.window header button {
    display: flex;
    align-items: center;
    justify-content: center;
    width: 31px;
    height: 17px;
    border: 1px solid #8b98a8;
    border-radius: 2px;
    background-image: linear-gradient(#d3dee9, #c6d3e1);
}

.window.active header button {
    border-color: #67809f;
    background-image: linear-gradient(#c5d7ea 50%, #a5bdd7 50%);
}

.window.active header .close {
    border-color: #6f2b26;
    background-image: linear-gradient(#e09a8c 50%, #c4402a 50%);
}

.window header button svg {
    width: 14px;
    height: 10px;
}

.chart {
    position: relative;
    flex: 1;
    min-height: 0;
    background-color: #000;
    box-shadow: 1px 1px 0 #fff, -1px -1px 0 #8b97a4;
}

.chart > svg {
    width: 100%;
    height: 100%;
    shape-rendering: crispEdges;
}

.chart text {
    font-family: "DejaVu Sans Condensed", "DejaVu Sans", sans-serif;
    font-size: 9px;
    fill: #fff;
}

.chart .price-label {
    fill: #000;
}

.frame {
    fill: none;
    stroke: #fff;
}

.grid {
    fill: none;
    stroke: #76828e;
    stroke-dasharray: 5 3;
}

.bid {
    stroke: #a9b3bd;
}

.bars {
    fill: none;
    stroke: #2fd82f;
}

.body-bear {
    fill: #fff;
    stroke: #2fd82f;
}

.body-bull {
    fill: #000;
    stroke: #2fd82f;
}

.average {
    fill: none;
    stroke: #d02020;
    shape-rendering: auto;
}

.signal {
    fill: none;
    stroke: #d02020;
    stroke-dasharray: 3 2;
}

.histogram {
    fill: none;
    stroke: #c0c0c0;
}

.cci {
    fill: none;
    stroke: #3f9f90;
    shape-rendering: auto;
}

/* one click trading panel, lies over the chart */
.one-click {
    position: absolute;
    top: 20px;
    left: 7px;
    display: grid;
    grid-template-columns: 46px 1fr 1fr 46px;
    grid-template-rows: 22px 34px;
    column-gap: 2px;
    width: 193px;
    background-color: #000;
    color: #fff;
}

.one-click.narrow {
    width: 187px;
}

.volume {
    grid-column: span 2;
    display: flex;
    height: 20px;
    min-width: 0;
    border: 1px solid #ccc;
    background-color: #fff;
}

.volume button {
    width: 19px;
    background-color: #e6e6e6;
    font-size: 7px;
    color: #111;
}

.volume input {
    flex: 1;
    min-width: 0;
    padding: 0 4px;
    border: none;
    font: inherit;
    text-align: right;
}

.side {
    border-bottom: 1px solid #f08080;
    font-size: 11px;
}

.price {
    grid-column: span 2;
    display: flex;
    align-items: baseline;
    justify-content: flex-end;
    gap: 4px;
    height: 34px;
    padding-right: 10px;
    line-height: 34px;
}

.price b {
    font-size: 12px;
}

.price span {
    font-size: 30px;
}

.price sup {
    align-self: flex-start;
    font-size: 12px;
    font-weight: bold;
    line-height: 18px;
}

.red .side {
    background-image: linear-gradient(#f8514f, #e33438);
}

.red .price {
    background-image: linear-gradient(#dc2a2d, #b00408);
}

.blue .side {
    border-bottom-color: #8080f0;
    background-image: linear-gradient(#5050fa, #3434dc);
}

.blue .price {
    background-image: linear-gradient(#2828d0, #0404a8);
}

/* terminal */
.terminal {
    display: flex;
    flex: none;
    height: 137px;
    padding: 2px 4px 0 0;
    border-top: 1px solid #b8b8b8;
    border-bottom: 1px solid #a0a0a0;
}

.terminal-side {
    display: flex;
    flex-direction: column;
    align-items: center;
    justify-content: space-between;
    width: 15px;
    padding: 5px 0 4px;
    background-image: linear-gradient(#f0f0f0 10px, #b4cae2 30px);
}

.terminal-side span {
    writing-mode: vertical-rl;
    transform: rotate(180deg);
}

.terminal-main {
    flex: 1;
    min-width: 0;
    padding-top: 2px;
}

.mail-wrap {
    display: flex;
    height: 106px;
    border: 1px solid #a0a0a0;
    border-width: 1px 0 0 1px;
    background-color: #fff;
}

.mail {
    flex: 1;
    align-self: flex-start;
}

.col-from {
    width: 466px;
}

.col-time {
    width: 132px;
}

.mail th {
    height: 24px;
    padding: 0 6px;
    border-right: 1px solid #e2e2e2;
    text-align: left;
}

.mail td {
    height: 20px;
    padding: 0 5px;
    border-top: 1px solid #c8c8c8;
    border-right: 1px solid #d0d0d0;
    font-weight: bold;
    line-height: 14px;
}

.mail th:last-child,
.mail td:last-child {
    border-right: none;
    text-align: right;
}

.mail tbody tr:nth-child(odd) {
    background-color: #ebebeb;
}

.mail td svg {
    display: inline-block;
    width: 14px;
    height: 10px;
    margin: 0 6px 0 -3px;
    vertical-align: -1px;
}

.terminal-tabs {
    padding-left: 2px;
}

.terminal-tabs button {
    padding: 0 10px 0 11px;
}

.terminal-tabs sub {
    margin-left: 2px;
    font-size: 9px;
    line-height: 9px;
    color: #d02030;
}

/* status bar */
.status-bar {
    display: grid;
    flex: none;
    grid-template-columns: 1fr 116px 102px 71px 71px 68px 70px 66px 130px;
    height: 23px;
    padding-top: 1px;
}

.status-bar span {
    display: flex;
    align-items: center;
    gap: 4px;
    padding-left: 5px;
    border-left: 1px solid #b0b0b0;
}

.status-bar span:first-child {
    padding-left: 2px;
    border-left: none;
}

/* taskbar */
.taskbar {
    display: grid;
    flex: none;
    grid-template-columns: 1fr auto 1fr;
    align-items: center;
    height: 48px;
    background-image: linear-gradient(90deg, #e2edf6, #d5e2f8 35%, #dbe1f4 60%, #dfeaf6);
}

.weather {
    display: flex;
    align-items: center;
    gap: 6px;
    padding-left: 19px;
    text-align: left;
}

.weather small {
    display: block;
    font-size: 11px;
    color: #555;
}

.apps {
    display: flex;
    gap: 6px;
}

.apps button {
    position: relative;
    display: flex;
    align-items: center;
    justify-content: center;
    width: 38px;
    height: 40px;
    border-radius: 4px;
}

.apps svg {
    width: 24px;
    height: 24px;
}

.apps .open::after,
.apps .current::after {
    content: "";
    position: absolute;
    bottom: 1px;
    width: 6px;
    height: 3px;
    border-radius: 2px;
    background-color: #7b8494;
}

.apps .current {
    background-color: #f3f5fc;
}

.apps .current::after {
    width: 16px;
    background-color: #1670c8;
}

.count {
    position: absolute;
    top: 7px;
    right: 3px;
    width: 16px;
    border-radius: 4px;
    background-color: #737b84;
    color: #fff;
    font-size: 9px;
    line-height: 12px;
}

.tray {
    display: flex;
    align-items: center;
    justify-content: flex-end;
    gap: 8px;
    padding-right: 18px;
}

.mic {
    margin: 0 10px 0 30px;
}

.clock {
    min-width: 58px;
    margin-left: 4px;
    text-align: right;
}

.pointer {
    position: absolute;
    top: 626px;
    left: 219px;
}
```
FILE: charts.js
```js
// x axis: 32px between grid lines, a time label on every second one
const JULY = ['25 Jul 2022', '28 Jul 12:00', '2 Aug 04:00', '4 Aug 20:00', '9 Aug 12:00', '12 Aug 04:00', '16 Aug 20:00', '19 Aug 12:00'];
const AUGUST = ['9 Aug 2022', '11 Aug 00:00', '12 Aug 08:00', '15 Aug 16:00', '17 Aug 00:00', '18 Aug 08:00', '19 Aug 16:00', '23 Aug 00:00'];

// series are stored on a finer grid, three units per pixel
const Y = v => v / 3 - 34;
const X = v => v / 2.655 - 10;

function add(svg, tag, cls, attrs, text) {
    const el = document.createElementNS('http://www.w3.org/2000/svg', tag);
    if (cls) el.setAttribute('class', cls);
    for (const key in attrs) el.setAttribute(key, attrs[key]);
    if (text) el.textContent = text;
    svg.appendChild(el);
    return el;
}

function label(svg, x, y, text, cls) {
    add(svg, 'text', cls, { x: x, y: y }, text);
}

function line(svg, cls, points) {
    const d = points.map(p => X(p[0]).toFixed(1) + ',' + Y(p[1]).toFixed(1)).join(' ');
    add(svg, 'polyline', cls, { points: d });
}

function drawBase(svg, chart) {
    const mainBottom = chart.sub ? 104.5 : 156.5;
    let d = '';
    for (let x = 36.5; x < 520; x += 32) d += 'M' + x + ' 3V156';
    chart.levels.forEach(l => { d += 'M4 ' + l[0] + 'H522'; });
    if (chart.sub) chart.sub.lines.forEach(y => { d += 'M4 ' + y + 'H522'; });
    add(svg, 'path', 'grid', { d: d });
    add(svg, 'path', 'bid', { d: 'M4 ' + chart.bid[0] + 'H522' });

    add(svg, 'rect', 'frame', { x: 3.5, y: 3.5, width: 519, height: mainBottom - 3.5 });
    if (chart.sub) {
        add(svg, 'rect', 'frame', { x: 3.5, y: 106.5, width: 519, height: 50 });
        label(svg, 8, 119, chart.sub.title);
        chart.sub.scale.forEach(s => label(svg, 526, s[0], s[1]));
    }
    chart.levels.forEach(l => {
        add(svg, 'path', 'frame', { d: 'M522 ' + l[0] + 'h4' });
        label(svg, 528, l[0] + 3, l[1]);
    });
    chart.times.forEach((t, i) => {
        add(svg, 'path', 'frame', { d: 'M' + (4.5 + i * 64) + ' 157v4' });
        label(svg, 3 + i * 64, 169, t);
    });
    add(svg, 'rect', '', { x: 524, y: chart.bid[0] - 5.5, width: 41, height: 11, fill: '#fff' });
    label(svg, 528, chart.bid[0] + 3, chart.bid[1], 'price-label');
}

function drawTitle(svg, symbol, prices) {
    add(svg, 'path', '', { d: 'M6 13h8l-4-4z', fill: '#fff' });
    label(svg, 19, 14, symbol);
    label(svg, 79, 14, prices);
}

// bars: [high, low] every 4px
function drawBars(svg, bars) {
    let d = '';
    bars.forEach((b, i) => {
        const x = 204.5 + i * 4;
        const open = i % 2 ? b[0] * 0.7 + b[1] * 0.3 : b[0] * 0.3 + b[1] * 0.7;
        const close = b[0] + b[1] - open;
        d += 'M' + x + ' ' + Y(b[0]) + 'V' + Y(b[1]);
        d += 'M' + (x - 1.5) + ' ' + Math.round(Y(open)) + '.5h1.5M' + x + ' ' + Math.round(Y(close)) + '.5h2';
    });
    add(svg, 'path', 'bars', { d: d });
}

// candles: [slot, kind, high, top, bottom, low], kind is w (bear), h (bull) or d (doji)
function drawCandles(svg, start, candles, conv) {
    candles.forEach(c => {
        const x = start + c[0] * 8;
        add(svg, 'path', 'bars', { d: 'M' + x + ' ' + conv(c[2]) + 'V' + conv(c[5]) });
        if (c[1] === 'd') {
            add(svg, 'path', 'bars', { d: 'M' + (x - 2) + ' ' + (Math.round(conv(c[3])) + 0.5) + 'h5' });
        } else {
            add(svg, 'rect', c[1] === 'w' ? 'body-bear' : 'body-bull', {
                x: x - 2, y: Math.round(conv(c[3])) + 0.5, width: 4,
                height: Math.max(2, Math.round(conv(c[4]) - conv(c[3])))
            });
        }
    });
}

function drawHistogram(svg, points) {
    let d = '';
    for (let x = 4.5; x < 516; x += 4) {
        const pos = (x + 10) * 2.655;
        let i = 1;
        while (i < points.length - 1 && points[i][0] < pos) i++;
        const a = points[i - 1], b = points[i];
        const v = a[1] + (b[1] - a[1]) * (pos - a[0]) / (b[0] - a[0]);
        d += 'M' + x + ' 130V' + Y(v).toFixed(1);
    }
    add(svg, 'path', 'histogram', { d: d });
}

// EURUSD
let svg = document.getElementById('eurusd');
drawBase(svg, {
    levels: [[21.5, '1.03350'], [54.5, '1.02240'], [87.5, '1.01160'], [120.5, '1.00050'], [153.5, '0.98970']],
    bid: [131.5, '0.99706'], times: AUGUST
});
add(svg, 'path', 'average', { d: 'M202 43L228 55L250 64L272 68L284 71L300 72L320 71L343 73L372 80L390 86L408 92L422 98L443 111L460 118L478 126L490 129L502 131' });
add(svg, 'path', 'bars', { d: 'M92.500 13v5M100.500 12v6M90 18.500h5M98 18.500h5' });
drawCandles(svg, 204.5, [
    [0, 'w', 67, 69, 75, 77], [1, 'd', 72, 74, 74, 78], [2, 'd', 72, 74, 74, 78], [3, 'w', 68, 74, 80, 82],
    [4, 'h', 78, 78, 81, 85], [5, 'h', 63, 72, 79, 80], [6, 'h', 68, 70, 73, 75], [7, 'h', 68, 70, 74, 76],
    [8, 'h', 66, 67, 71, 73], [9, 'w', 67, 67, 69, 78], [10, 'w', 65, 69, 75, 79], [11, 'h', 62, 72, 75, 76],
    [12, 'h', 61, 68, 73, 74], [13, 'h', 64, 65, 70, 71], [14, 'w', 64, 65, 72, 73], [15, 'd', 68, 71, 71, 75],
    [16, 'd', 65, 71, 71, 75], [17, 'w', 71, 71, 95, 95], [18, 'd', 93, 96, 96, 99], [19, 'd', 92, 97, 97, 101],
    [20, 'd', 96, 99, 99, 103], [21, 'h', 92, 95, 99, 100], [22, 'w', 95, 95, 103, 109], [23, 'w', 98, 102, 112, 112],
    [24, 'd', 108, 110, 110, 113], [25, 'w', 110, 111, 114, 115], [26, 'h', 108, 110, 115, 116], [27, 'w', 110, 110, 119, 124],
    [28, 'w', 116, 119, 121, 123], [29, 'w', 120, 120, 142, 145], [30, 'h', 138, 139, 143, 145], [31, 'd', 136, 140, 140, 144],
    [32, 'd', 137, 140, 140, 143], [33, 'd', 138, 141, 141, 153], [34, 'w', 139, 142, 145, 149], [35, 'h', 116, 128, 146, 148],
    [36, 'w', 128, 128, 131, 133], [37, 'd', 131, 131, 131, 132]
], v => v);
drawTitle(svg, 'EURUSD,H4', '0.99682 0.99707 0.99682 0.99706');

// GBPUSD
svg = document.getElementById('gbpusd');
drawBase(svg, {
    levels: [[21.5, '1.22500'], [54.5, '1.21140'], [87.5, '1.19820'], [120.5, '1.18460'], [153.5, '1.17140']],
    bid: [125.5, '1.18294'], times: JULY
});
add(svg, 'path', 'bars', { d: 'M20.500 79v13M24.500 79v7M122.500 13v5M126.500 12v6M130.500 14v5' });
drawBars(svg, [
    [237, 262], [225, 250], [240, 332], [288, 350], [280, 305], [288, 318], [278, 312], [262, 300], [258, 292], [258, 300],
    [285, 302], [282, 300], [285, 302], [262, 300], [255, 295], [256, 285], [280, 300], [290, 305], [286, 303], [258, 300],
    [165, 290], [145, 210], [145, 185], [170, 208], [190, 218], [165, 215], [168, 210], [168, 198], [182, 214], [195, 222],
    [205, 220], [190, 225], [215, 275], [250, 278], [242, 265], [242, 262], [240, 272], [262, 300], [262, 312], [270, 305],
    [280, 315], [305, 325], [308, 325], [312, 348], [310, 342], [265, 320], [265, 300], [268, 290], [258, 285], [240, 270],
    [262, 310], [272, 330], [300, 328], [305, 325], [308, 328], [300, 358], [290, 325], [308, 398], [390, 405], [395, 425],
    [398, 428], [405, 430], [425, 480], [455, 505], [470, 490], [475, 495], [472, 498], [470, 508], [472, 490], [475, 540],
    [510, 530], [512, 530], [508, 530], [512, 560], [512, 528], [435, 530], [458, 485], [475, 483]
]);
line(svg, 'average', [[38, 350], [60, 343], [85, 337]]);
line(svg, 'average', [
    [568, 235], [600, 250], [640, 265], [680, 275], [710, 287], [760, 290], [790, 272], [820, 255], [850, 232], [880, 220],
    [905, 205], [930, 208], [975, 235], [1020, 268], [1055, 288], [1100, 293], [1130, 300], [1165, 302], [1185, 312],
    [1210, 335], [1240, 378], [1280, 425], [1320, 468], [1350, 492], [1385, 497]
]);
drawTitle(svg, 'GBPUSD,H4', '1.18229 1.18317 1.18229 1.18294');

// USDCHF with MACD
svg = document.getElementById('usdchf');
drawBase(svg, {
    levels: [[35.5, '0.95990'], [68.5, '0.94850'], [101.5, '0.93710']],
    bid: [23.5, '0.96397'], times: JULY,
    sub: { title: 'MACD(12,26,9) 0.00341 0.00355', lines: [130.5], scale: [[117, '0.00447'], [134, '0.00'], [153, '-0.00502']] }
});
drawBars(svg, [
    [232, 250], [228, 248], [185, 265], [165, 205], [180, 205], [178, 200], [178, 212], [190, 238], [210, 240], [225, 275],
    [235, 262], [242, 256], [245, 258], [246, 278], [262, 290], [262, 288], [255, 270], [258, 272], [256, 270], [256, 285],
    [275, 375], [345, 385], [350, 388], [352, 365], [342, 362], [340, 392], [375, 398], [372, 406], [362, 388], [355, 378],
    [352, 372], [360, 378], [352, 375], [335, 375], [352, 372], [362, 378], [360, 375], [325, 370], [322, 368], [330, 362],
    [320, 342], [320, 335], [318, 335], [300, 335], [282, 312], [282, 310], [285, 306], [290, 310], [288, 310], [272, 305],
    [258, 292], [254, 285], [262, 290], [270, 298], [262, 292], [256, 290], [258, 292], [232, 290], [232, 248], [222, 250],
    [208, 235], [208, 242], [225, 250], [206, 240], [208, 232], [205, 230], [205, 225], [202, 228], [205, 235], [155, 225],
    [158, 185], [162, 182], [165, 180], [148, 175], [125, 160], [125, 205], [165, 182], [172, 180]
]);
drawHistogram(svg, [
    [38, 530], [60, 525], [100, 518], [150, 518], [200, 525], [240, 538], [290, 543], [340, 545], [380, 545], [410, 530],
    [440, 505], [460, 492], [480, 486], [510, 475], [540, 478], [570, 490], [600, 485], [640, 480], [680, 488], [710, 495],
    [740, 505], [770, 512], [790, 530], [820, 548], [850, 562], [880, 560], [920, 552], [960, 535], [1000, 510], [1040, 495],
    [1080, 485], [1110, 472], [1150, 475], [1190, 460], [1220, 452], [1260, 452], [1310, 448], [1350, 435], [1390, 440]
]);
line(svg, 'signal', [
    [38, 537], [90, 526], [150, 522], [210, 527], [280, 540], [340, 545], [380, 547], [420, 538], [470, 515], [520, 488],
    [560, 480], [620, 482], [690, 482], [730, 495], [790, 510], [830, 530], [870, 550], [910, 556], [960, 548], [1010, 530],
    [1060, 505], [1110, 480], [1160, 475], [1230, 457], [1300, 452], [1350, 440], [1390, 440]
]);
drawTitle(svg, 'USDCHF,H4', '0.96322 0.96416 0.96322 0.96397');

// USDJPY with CCI
svg = document.getElementById('usdjpy');
drawBase(svg, {
    levels: [[35.5, '135.960'], [68.5, '133.860'], [101.5, '131.760']],
    bid: [23.5, '136.751'], times: AUGUST,
    sub: {
        title: 'CCI(14) -96.0943', lines: [120.5, 127.5, 133.5],
        scale: [[117, '277.7036'], [124, '100'], [131, '0.00'], [137, '-100'], [153, '-421.7468']]
    }
});
drawCandles(svg, 44.5, [
    [0, 'w', 336, 338, 342, 365], [1, 'w', 338, 342, 372, 395], [2, 'h', 345, 352, 370, 380], [3, 'd', 345, 355, 355, 375],
    [4, 'h', 338, 340, 360, 362], [5, 'w', 338, 340, 370, 375], [6, 'w', 360, 372, 400, 405], [7, 'h', 342, 357, 398, 405],
    [8, 'h', 340, 348, 358, 360], [9, 'h', 335, 337, 346, 350], [10, 'd', 335, 338, 338, 342], [11, 'd', 335, 338, 338, 342],
    [12, 'd', 335, 338, 338, 342], [15, 'w', 335, 337, 346, 350], [16, 'h', 335, 337, 346, 349], [17, 'd', 335, 337, 337, 342],
    [18, 'w', 333, 335, 362, 370], [19, 'h', 335, 340, 362, 366], [20, 'h', 330, 333, 341, 342], [21, 'w', 330, 332, 336, 350],
    [22, 'h', 322, 324, 338, 342], [23, 'h', 298, 303, 326, 335], [24, 'h', 268, 274, 304, 306], [25, 'w', 266, 274, 284, 292],
    [26, 'w', 280, 284, 289, 292], [27, 'd', 282, 293, 293, 300], [28, 'd', 290, 295, 295, 305], [29, 'h', 255, 262, 294, 300],
    [30, 'h', 236, 248, 262, 270], [31, 'h', 230, 236, 250, 258], [32, 'w', 230, 236, 250, 258], [33, 'w', 246, 252, 262, 270],
    [34, 'h', 246, 250, 262, 266], [35, 'h', 236, 243, 249, 262], [36, 'w', 238, 245, 256, 272], [37, 'h', 222, 224, 257, 264],
    [38, 'h', 208, 212, 223, 224], [39, 'h', 180, 193, 214, 220], [40, 'w', 190, 192, 198, 206], [41, 'h', 172, 183, 197, 204],
    [42, 'h', 153, 168, 186, 190], [43, 'h', 152, 166, 171, 180], [44, 'd', 165, 168, 168, 172], [45, 'h', 145, 149, 168, 170],
    [46, 'd', 138, 148, 148, 162], [47, 'w', 138, 149, 164, 170], [48, 'h', 145, 150, 165, 172], [49, 'h', 128, 136, 152, 160],
    [50, 'd', 134, 137, 137, 145], [51, 'w', 126, 141, 150, 158], [52, 'd', 144, 148, 148, 160], [53, 'd', 142, 150, 150, 160],
    [54, 'h', 128, 136, 152, 154], [55, 'w', 126, 136, 187, 222], [56, 'h', 165, 173, 188, 192]
], Y);
line(svg, 'cci', [
    [38, 478], [80, 464], [105, 478], [123, 482], [145, 560], [187, 520], [230, 498], [272, 505], [315, 488], [378, 482],
    [420, 458], [465, 478], [505, 472], [527, 490], [548, 488], [569, 478], [590, 489], [611, 475], [654, 432], [700, 458],
    [740, 470], [780, 454], [805, 454], [850, 468], [887, 464], [910, 472], [970, 445], [1000, 451], [1050, 452], [1080, 460],
    [1120, 460], [1145, 469], [1190, 462], [1230, 464], [1270, 472], [1290, 462], [1312, 513], [1350, 503]
]);
drawTitle(svg, 'USDJPY,H4', '136.757 136.769 136.748 136.751');
```
